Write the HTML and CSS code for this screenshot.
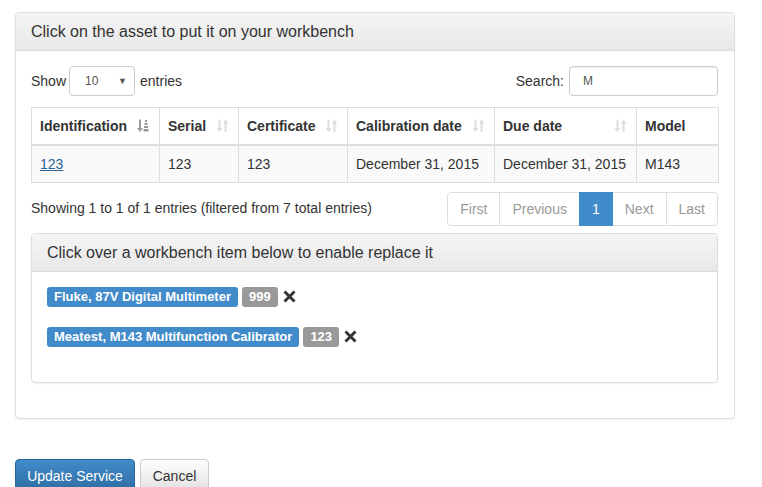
FILE: index.html
```html
<!DOCTYPE html>
<html>
<head>
<meta charset="utf-8">
<title>Workbench</title>
<link rel="stylesheet" href="styles.css">
</head>
<body>
<div class="page">
  <div class="panel outer">
    <div class="panel-heading">Click on the asset to put it on your workbench</div>
    <div class="panel-body">
      <div class="dt-top">
        <div class="length">Show <span class="select"><span class="sel-val">10</span><span class="sel-arrow">&#9660;</span></span> entries</div>
        <div class="filter">Search: <span class="input">M</span></div>
      </div>
      <table class="dt">
        <colgroup>
          <col class="c1"><col class="c2"><col class="c3"><col class="c4"><col class="c5"><col class="c6">
        </colgroup>
        <thead>
          <tr>
            <th><div class="th-in"><span>Identification</span>
              <svg class="sort active" width="13" height="14" viewBox="0 0 13 14"><path d="M2 0.5h2v8.5h2l-3 4-3-4h2z" fill="#999"/><rect x="8" y="1" width="2" height="2" fill="#999"/><rect x="7.5" y="4" width="3" height="2" fill="#999"/><rect x="7" y="7" width="4" height="2" fill="#999"/><rect x="6.5" y="10" width="5" height="2.5" fill="#999"/></svg></div></th>
            <th><div class="th-in"><span>Serial</span>
              <svg class="sort" width="13" height="14" viewBox="0 0 13 14"><path d="M2.5 0.5h2v8.5h2l-3 4-3-4h2z" fill="#ddd"/><path d="M8.5 13h2V4.5h2l-3-4-3 4h2z" fill="#ddd"/></svg></div></th>
            <th><div class="th-in"><span>Certificate</span>
              <svg class="sort" width="13" height="14" viewBox="0 0 13 14"><path d="M2.5 0.5h2v8.5h2l-3 4-3-4h2z" fill="#ddd"/><path d="M8.5 13h2V4.5h2l-3-4-3 4h2z" fill="#ddd"/></svg></div></th>
            <th><div class="th-in"><span>Calibration date</span>
              <svg class="sort" width="13" height="14" viewBox="0 0 13 14"><path d="M2.5 0.5h2v8.5h2l-3 4-3-4h2z" fill="#ddd"/><path d="M8.5 13h2V4.5h2l-3-4-3 4h2z" fill="#ddd"/></svg></div></th>
            <th><div class="th-in"><span>Due date</span>
              <svg class="sort" width="13" height="14" viewBox="0 0 13 14"><path d="M2.5 0.5h2v8.5h2l-3 4-3-4h2z" fill="#ddd"/><path d="M8.5 13h2V4.5h2l-3-4-3 4h2z" fill="#ddd"/></svg></div></th>
            <th><div class="th-in"><span>Model</span></div></th>
          </tr>
        </thead>
        <tbody>
          <tr>
            <td><a href="#" class="link">123</a></td>
            <td>123</td>
            <td>123</td>
            <td>December 31, 2015</td>
            <td>December 31, 2015</td>
            <td>M143</td>
          </tr>
        </tbody>
      </table>
      <div class="dt-bottom">
        <div class="info">Showing 1 to 1 of 1 entries (filtered from 7 total entries)</div>
        <ul class="pagination">
          <li class="disabled"><span>First</span></li>
          <li class="disabled"><span>Previous</span></li>
          <li class="active"><span>1</span></li>
          <li class="disabled"><span>Next</span></li>
          <li class="disabled"><span>Last</span></li>
        </ul>
      </div>

      <div class="panel inner">
        <div class="panel-heading">Click over a workbench item below to enable replace it</div>
        <div class="panel-body inner-body">
          <div class="item">
            <span class="label label-primary">Fluke, 87V Digital Multimeter</span>
            <span class="label label-gray">999</span>
            <svg class="remove" width="13" height="13" viewBox="0 0 13 13"><path d="M2.5 0.5L6.5 4.5 10.5 0.5 12.5 2.5 8.5 6.5 12.5 10.5 10.5 12.5 6.5 8.5 2.5 12.5 0.5 10.5 4.5 6.5 0.5 2.5z" fill="#333"/></svg>
          </div>
          <div class="item">
            <span class="label label-primary">Meatest, M143 Multifunction Calibrator</span>
            <span class="label label-gray">123</span>
            <svg class="remove" width="13" height="13" viewBox="0 0 13 13"><path d="M2.5 0.5L6.5 4.5 10.5 0.5 12.5 2.5 8.5 6.5 12.5 10.5 10.5 12.5 6.5 8.5 2.5 12.5 0.5 10.5 4.5 6.5 0.5 2.5z" fill="#333"/></svg>
          </div>
        </div>
      </div>
    </div>
  </div>

  <div class="actions">
    <button class="btn btn-primary">Update Service</button>
    <button class="btn btn-default">Cancel</button>
  </div>
</div>
</body>
</html>
```

FILE: styles.css
```css
* { box-sizing: border-box; }
html, body { margin: 0; padding: 0; background: #fff; }
body {
  font-family: "Liberation Sans", Arial, sans-serif;
  font-size: 14px;
  line-height: 20px;
  color: #333;
}
.page { padding: 12px 15px 0 15px; }

.panel {
  border: 1px solid #ddd;
  border-radius: 4px;
  background: #fff;
  box-shadow: 0 1px 2px rgba(0,0,0,0.05);
}
.outer { width: 720px; }
.panel-heading {
  padding: 10px 15px;
  font-size: 16px;
  line-height: 17px;
  color: #333;
  background: linear-gradient(to bottom, #f5f5f5 0%, #e8e8e8 100%);
  border-bottom: 1px solid #ddd;
  border-radius: 3px 3px 0 0;
}
.panel-body { padding: 15px; }

.dt-top {
  display: flex;
  justify-content: space-between;
  align-items: center;
  height: 30px;
}
.length, .filter { display: flex; align-items: center; }
.select {
  display: inline-flex;
  align-items: center;
  justify-content: space-between;
  width: 66px;
  height: 30px;
  margin: 0 5px 0 3px;
  padding: 0 7px 0 15px;
  border: 1px solid #ccc;
  border-radius: 4px;
  font-size: 12px;
  color: #555;
}
.sel-arrow { font-size: 9px; color: #555; }
.input {
  display: inline-flex;
  align-items: center;
  width: 149px;
  height: 30px;
  margin-left: 5px;
  margin-right: 1px;
  padding: 0 13px;
  border: 1px solid #ccc;
  border-radius: 4px;
  font-size: 12px;
  color: #555;
  box-shadow: inset 0 1px 1px rgba(0,0,0,0.075);
}

.dt {
  width: 687px;
  table-layout: fixed;
  border-collapse: collapse;
  margin-top: 11px;
  margin-bottom: 6px;
}
.c1 { width: 128px; } .c2 { width: 79px; } .c3 { width: 109px; }
.c4 { width: 147px; } .c5 { width: 142px; } .c6 { width: 82px; }
.dt th, .dt td {
  border: 1px solid #ddd;
  padding: 8px;
  text-align: left;
  white-space: nowrap;
  line-height: 20px;
}
.dt th { font-weight: bold; border-bottom: 2px solid #ddd; }
.th-in { display: flex; justify-content: space-between; align-items: center; padding-right: 1px; }
.sort { flex: none; }
.dt tbody tr { background: #f9f9f9; }
.link { color: #2a6496; text-decoration: underline; }

.dt-bottom {
  display: flex;
  justify-content: space-between;
  align-items: flex-start;
}
.info { padding-top: 9px; }
.pagination {
  display: flex;
  list-style: none;
  margin: 3px 1px 7px 0;
  padding: 0;
}
.pagination li span {
  display: block;
  padding: 6px 12px;
  line-height: 20px;
  border: 1px solid #ddd;
  margin-left: -1px;
  color: #999;
  background: #fff;
}
.pagination li:first-child span { margin-left: 0; border-radius: 4px 0 0 4px; }
.pagination li:last-child span { border-radius: 0 4px 4px 0; }
.pagination li.active span {
  background: #428bca;
  border-color: #428bca;
  color: #fff;
  position: relative;
  z-index: 1;
}

.inner { width: 687px; margin-bottom: 20px; }
.inner-body { padding: 15px 15px 15px 15px; }
.item {
  display: flex;
  align-items: center;
  height: 20px;
  margin-bottom: 20px;
}
.label {
  display: inline-block;
  font-size: 13px;
  font-weight: bold;
  line-height: 20px;
  height: 20px;
  padding: 0 7px;
  color: #fff;
  border-radius: 3px;
  white-space: nowrap;
}
.label-primary { background: #428bca; }
.label-gray { background: #999; margin-left: 4px; }
.remove { margin-left: 5px; margin-top: -2px; }

.actions { margin-top: 40px; display: flex; gap: 5px; }
.btn {
  font-family: "Liberation Sans", Arial, sans-serif;
  font-size: 14px;
  line-height: 20px;
  padding: 6px 0;
  text-align: center;
  border-radius: 4px;
  border: 1px solid transparent;
  cursor: pointer;
  white-space: nowrap;
}
.btn-primary {
  width: 120px;
  color: #fff;
  background: linear-gradient(to bottom, #428bca 0%, #2d6ca2 100%);
  border-color: #2b669a;
}
.btn-default {
  width: 69px;
  color: #333;
  background: linear-gradient(to bottom, #fff 0%, #e0e0e0 100%);
  border-color: #ccc;
}
```
